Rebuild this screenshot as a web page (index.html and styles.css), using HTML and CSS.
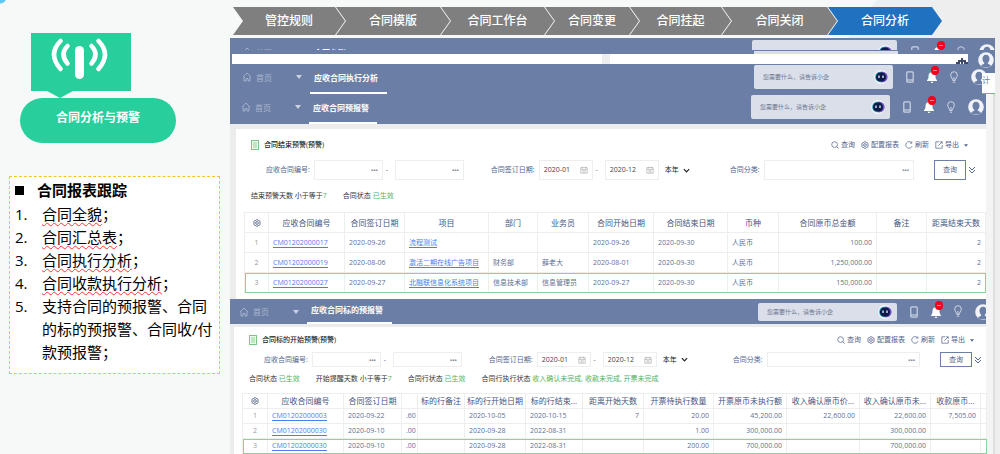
FILE: index.html
```html
<!DOCTYPE html>
<html lang="zh-CN">
<head>
  <meta charset="UTF-8">
  <meta name="viewport" content="width=device-width, initial-scale=1.0">
  <title>合同分析与预警</title>
  <link rel="stylesheet" href="styles.css">
</head>
<body>
  <svg class="sprite" aria-hidden="true">
    <symbol id="i-home" viewBox="0 0 10 10"><path d="M1 5 5 1l4 4M2 4.500V9h2V6.500h2V9h2V4.500" fill="none" stroke="currentColor" stroke-width=".9"/></symbol>
    <symbol id="i-phone" viewBox="0 0 8 12"><rect x=".8" y=".8" width="6.400" height="10.400" rx="1" fill="none" stroke="currentColor" stroke-width="1.200"/><path d="M1 9h6" stroke="currentColor" stroke-width="1.200"/></symbol>
    <symbol id="i-bell" viewBox="0 0 10 12"><path d="M5 0c.8 0 1 .6 1 1.200C8 1.800 8.500 3.500 8.500 5.500c0 2 .5 2.800 1.500 3.700V10H0v-.8c1-.9 1.500-1.700 1.500-3.700C1.500 3.500 2 1.800 4 1.200 4 .6 4.200 0 5 0zM3.700 10.700h2.600C6.200 11.500 5.700 12 5 12s-1.200-.5-1.300-1.300z" fill="#fff"/></symbol>
    <symbol id="i-bulb" viewBox="0 0 8 13"><path d="M2.800 9.500C2.800 7.500 .7 6.500 .7 4a3.300 3.300 0 0 1 6.600 0c0 2.500-2.100 3.500-2.100 5.500zM2.800 11.200h2.400M4 9V6" fill="none" stroke="currentColor" stroke-width="1"/></symbol>
    <symbol id="i-avatar" viewBox="0 0 16 16"><circle cx="8" cy="8" r="7.800" fill="#f1f3f8"/><path d="M8 2.800c2.300 0 3.500 1.700 3.500 4 0 1.600-.6 3-1.700 3.900v1.100L13 13.300 11 15.200H5L3 13.300l3.200-1.500v-1.100C5.100 9.800 4.500 8.400 4.500 6.800c0-2.300 1.200-4 3.500-4z" fill="#6b7fa6"/></symbol>
    <symbol id="i-robot" viewBox="0 0 14 14"><circle cx="7" cy="7" r="7" fill="#f3f4fa"/><rect x="1.200" y="1.800" width="11.600" height="10.400" rx="5" fill="#2aa8b8"/><path d="M7 1.800h1.500a4.600 4.600 0 0 1 0 10.400H7z" fill="#7257c9"/><rect x="2" y="2.400" width="10" height="9.200" rx="4.400" fill="#10194a"/><path d="M5 5.500v2.600M9 5.500v2.600" stroke="#dff" stroke-width="1.300"/></symbol>
    <symbol id="i-sheet" viewBox="0 0 8 10"><rect x=".5" y=".5" width="7" height="9" fill="#eef9ef" stroke="#7cc587"/><path d="M2 3h4M2 5h4M2 7h4" stroke="#7cc587" stroke-width=".8"/></symbol>
    <symbol id="i-search" viewBox="0 0 10 10"><circle cx="4.500" cy="4.500" r="3.600" fill="none" stroke="currentColor" stroke-width=".9"/><path d="m7 7 2.500 2.500" stroke="currentColor"/></symbol>
    <symbol id="i-gear" viewBox="0 0 10 10"><path d="m5 .7 3.800 2.200v4.200L5 9.300 1.200 7.100V2.900z" fill="none" stroke="currentColor"/><circle cx="5" cy="5" r="1.700" fill="none" stroke="currentColor"/></symbol>
    <symbol id="i-refresh" viewBox="0 0 10 10"><path d="M8.800 6.500A4.100 4.100 0 1 1 8 2.100M8.500.5v2.200H6.300" fill="none" stroke="currentColor" stroke-width=".9"/></symbol>
    <symbol id="i-export" viewBox="0 0 10 10"><path d="M5.500 1H1v8h8V5M4 6l5-5M6.500 1H9v2.500" fill="none" stroke="currentColor" stroke-width=".9"/></symbol>
    <symbol id="i-date" viewBox="0 0 10 10"><path d="M1 2h8v7H1zM1 4.300h8M3 .7V3M7 .7V3M3 6h4M3 7.500h4" fill="none" stroke="currentColor" stroke-width=".8"/></symbol>
    <symbol id="i-down" viewBox="0 0 8 8"><path d="m1 2.500 3 3 3-3" fill="none" stroke="currentColor" stroke-width="1.400"/></symbol>
    <symbol id="i-more" viewBox="0 0 8 8"><path d="m1 1 3 3 3-3M1 4l3 3 3-3" fill="none" stroke="currentColor"/></symbol>
    <symbol id="i-caret" viewBox="0 0 6 4"><path d="M0 0h6L3 4z" fill="currentColor"/></symbol>
  </svg>

  <div class="page">
    <aside class="sidebar">
      <div class="badge">
        <svg viewBox="0 0 60 44" fill="none" stroke="#fff" stroke-linecap="round">
          <path d="M29.500 13.500v24" stroke-width="9"/>
          <path d="M17.500 9q-8 8 0 17.500M41.500 9q8 8 0 17.500" stroke-width="4.500"/>
          <path d="M10.500 4q-13 13 0 28M48.500 4q13 13 0 28" stroke-width="4.500"/>
        </svg>
      </div>
      <h1 class="pill">合同分析与预警</h1>
      <section class="notes">
        <h2>合同报表跟踪</h2>
        <ol>
          <li><span class="typo">合同全貌</span>；</li>
          <li><span class="typo">合同汇总表</span>；</li>
          <li><span class="typo">合同执行分析</span>；</li>
          <li><span class="typo">合同收款执行分析</span>；</li>
          <li>支持合同的预报警、合同的标的预报警、合同收/付款预报警；</li>
        </ol>
      </section>
    </aside>

    <main class="main">
      <ol class="steps">
        <li>管控规则</li>
        <li>合同模版</li>
        <li>合同工作台</li>
        <li>合同变更</li>
        <li>合同挂起</li>
        <li>合同关闭</li>
        <li class="active">合同分析</li>
      </ol>

      <div class="reports">
        <div class="clipped">
          <header class="bar bar-back">
            <a class="home" href="#"><svg><use href="#i-home"/></svg>首页</a>
            <span class="tab">合同台账</span>
            <div class="bar-tools">
              <span class="ask"><svg><use href="#i-robot"/></svg></span>
              <svg class="phone"><use href="#i-phone"/></svg>
              <span class="bell"><svg><use href="#i-bell"/></svg><i></i></span>
              <svg class="bulb"><use href="#i-bulb"/></svg>
              <svg class="avatar"><use href="#i-avatar"/></svg>
            </div>
          </header>
        </div>
        <div class="edge"><span></span></div>
        <div class="strip">
          <span class="strip-page"></span>
          <span class="strip-page wide"><svg viewBox="0 0 12 6"><path d="M0 6V4h2V2h3V0h2v2h3v2h2v2H8V4H7v2H5V4H4v2z" fill="#3d4867"/></svg></span>
          <svg class="avatar"><use href="#i-avatar"/></svg>
        </div>

        <header class="bar">
          <a class="home" href="#"><svg><use href="#i-home"/></svg>首页</a>
          <svg class="caret"><use href="#i-caret"/></svg>
          <span class="tab tab-wide">应收合同执行分析</span>
          <div class="bar-tools">
            <label class="ask"><input type="text" placeholder="您需要什么，请告诉小企" aria-label="搜索"><svg><use href="#i-robot"/></svg></label>
            <svg class="phone"><use href="#i-phone"/></svg>
            <span class="bell"><svg><use href="#i-bell"/></svg><i></i></span>
            <svg class="bulb"><use href="#i-bulb"/></svg>
            <svg class="avatar"><use href="#i-avatar"/></svg>
          </div>
          <span class="peek">计</span>
        </header>

        <header class="bar bar-inset">
          <a class="home" href="#"><svg><use href="#i-home"/></svg>首页</a>
          <svg class="caret"><use href="#i-caret"/></svg>
          <span class="tab">应收合同预报警</span>
          <div class="bar-tools">
            <label class="ask"><input type="text" placeholder="您需要什么，请告诉小企" aria-label="搜索"><svg><use href="#i-robot"/></svg></label>
            <svg class="phone"><use href="#i-phone"/></svg>
            <span class="bell"><svg><use href="#i-bell"/></svg><i></i></span>
            <svg class="bulb"><use href="#i-bulb"/></svg>
            <svg class="avatar"><use href="#i-avatar"/></svg>
          </div>
        </header>

        <section class="panel">
          <div class="panel-head">
            <svg class="sheet"><use href="#i-sheet"/></svg>
            <h3>合同结束预警(预警)</h3>
            <div class="actions">
              <button><svg><use href="#i-search"/></svg>查询</button>
              <button><svg><use href="#i-gear"/></svg>配置报表</button>
              <button><svg><use href="#i-refresh"/></svg>刷新</button>
              <button><svg><use href="#i-export"/></svg>导出<svg class="mini"><use href="#i-caret"/></svg></button>
            </div>
          </div>
          <form class="filters">
            <label for="no-a">应收合同编号:</label>
            <span class="box"><input id="no-a" type="text"><b>•••</b></span>
            <i>-</i>
            <span class="box"><input type="text" aria-label="应收合同编号至"><b>•••</b></span>
            <label for="date-a" class="l-date">合同签订日期:</label>
            <span class="box date"><input id="date-a" type="text" value="2020-01"><svg><use href="#i-date"/></svg></span>
            <i>-</i>
            <span class="box date"><input type="text" value="2020-12" aria-label="合同签订日期至"><svg><use href="#i-date"/></svg></span>
            <span class="period"><select aria-label="期间"><option>本年</option></select><svg><use href="#i-down"/></svg></span>
            <label for="type-a" class="l-type">合同分类:</label>
            <span class="box grow"><input id="type-a" type="text"><b>•••</b></span>
            <button type="button" class="query">查询</button>
            <svg class="more"><use href="#i-more"/></svg>
          </form>
          <p class="summary"><span>结束预警天数 小于等于<em>7</em></span><span>合同状态 <em>已生效</em></span></p>
          <table class="grid grid-end">
            <colgroup><col><col><col><col><col><col><col><col><col><col><col><col></colgroup>
            <thead>
              <tr><th><svg><use href="#i-gear"/></svg></th><th>应收合同编号</th><th>合同签订日期</th><th>项目</th><th>部门</th><th>业务员</th><th>合同开始日期</th><th>合同结束日期</th><th>币种</th><th>合同原币总金额</th><th>备注</th><th>距离结束天数</th></tr>
            </thead>
            <tbody>
              <tr><td>1</td><td><a href="#">CM01202000017</a></td><td>2020-09-26</td><td><a href="#">流程测试</a></td><td></td><td></td><td>2020-09-26</td><td>2020-09-30</td><td>人民币</td><td class="num">100.00</td><td></td><td class="num">2</td></tr>
              <tr><td>2</td><td><a href="#">CM01202000019</a></td><td>2020-08-06</td><td><a href="#">激活二期在线广告项目</a></td><td>财务部</td><td>薛老大</td><td>2020-08-01</td><td>2020-09-30</td><td>人民币</td><td class="num">1,250,000.00</td><td></td><td class="num">2</td></tr>
              <tr class="selected"><td>3</td><td><a href="#">CM01202000027</a></td><td>2020-09-27</td><td><a href="#">北融联信息化系统项目</a></td><td>信息技术部</td><td>信息管理员</td><td>2020-09-27</td><td>2020-09-30</td><td>人民币</td><td class="num">150,000.00</td><td></td><td class="num">2</td></tr>
            </tbody>
          </table>
        </section>

        <header class="bar bar-inset bar-low">
          <a class="home" href="#"><svg><use href="#i-home"/></svg>首页</a>
          <svg class="caret"><use href="#i-caret"/></svg>
          <span class="tab tab-wide">应收合同标的预报警</span>
          <div class="bar-tools">
            <label class="ask"><input type="text" placeholder="您需要什么，请告诉小企" aria-label="搜索"><svg><use href="#i-robot"/></svg></label>
            <svg class="phone"><use href="#i-phone"/></svg>
            <span class="bell"><svg><use href="#i-bell"/></svg><i></i></span>
            <svg class="bulb"><use href="#i-bulb"/></svg>
            <svg class="avatar"><use href="#i-avatar"/></svg>
          </div>
        </header>

        <section class="panel panel-low">
          <div class="panel-head">
            <svg class="sheet"><use href="#i-sheet"/></svg>
            <h3>合同标的开始预警(预警)</h3>
            <div class="actions">
              <button><svg><use href="#i-search"/></svg>查询</button>
              <button><svg><use href="#i-gear"/></svg>配置报表</button>
              <button><svg><use href="#i-refresh"/></svg>刷新</button>
              <button><svg><use href="#i-export"/></svg>导出<svg class="mini"><use href="#i-caret"/></svg></button>
            </div>
          </div>
          <form class="filters">
            <label for="no-b">应收合同编号:</label>
            <span class="box"><input id="no-b" type="text"><b>•••</b></span>
            <i>-</i>
            <span class="box"><input type="text" aria-label="应收合同编号至"><b>•••</b></span>
            <label for="date-b" class="l-date">合同签订日期:</label>
            <span class="box date"><input id="date-b" type="text" value="2020-01"><svg><use href="#i-date"/></svg></span>
            <i>-</i>
            <span class="box date"><input type="text" value="2020-12" aria-label="合同签订日期至"><svg><use href="#i-date"/></svg></span>
            <span class="period"><select aria-label="期间"><option>本年</option></select><svg><use href="#i-down"/></svg></span>
            <label for="type-b" class="l-type">合同分类:</label>
            <span class="box grow"><input id="type-b" type="text"><b>•••</b></span>
            <button type="button" class="query">查询</button>
            <svg class="more"><use href="#i-more"/></svg>
          </form>
          <p class="summary"><span>合同状态 <em>已生效</em></span><span>开始提醒天数 小于等于<em>7</em></span><span>合同行状态 <em>已生效</em></span><span>合同行执行状态 <em>收入确认未完成, 收款未完成, 开票未完成</em></span></p>
          <table class="grid grid-start">
            <colgroup><col><col><col><col><col><col><col><col><col><col><col><col><col><col></colgroup>
            <thead>
              <tr><th><svg><use href="#i-gear"/></svg></th><th>应收合同编号</th><th>合同签订日期</th><th></th><th>标的行备注</th><th>标的行开始日期</th><th>标的行结束...</th><th>距离开始天数</th><th>开票待执行数量</th><th>开票原币未执行额</th><th>收入确认原币价...</th><th>收入确认原币未...</th><th>收款原币...</th><th></th></tr>
            </thead>
            <tbody>
              <tr><td>1</td><td><a href="#">CM01202000003</a></td><td>2020-09-22</td><td class="num">.60</td><td></td><td>2020-10-05</td><td>2020-10-15</td><td class="num">7</td><td class="num">20.00</td><td class="num">45,200.00</td><td class="num">22,600.00</td><td class="num">22,600.00</td><td class="num">7,505.00</td><td></td></tr>
              <tr><td>2</td><td><a href="#">CM01202000030</a></td><td>2020-09-10</td><td class="num">.00</td><td></td><td>2020-09-28</td><td>2022-08-31</td><td></td><td class="num">1.00</td><td class="num">300,000.00</td><td></td><td class="num">300,000.00</td><td></td><td></td></tr>
              <tr class="selected"><td>3</td><td><a href="#">CM01202000030</a></td><td>2020-09-10</td><td class="num">.00</td><td></td><td>2020-09-28</td><td>2022-08-31</td><td></td><td class="num">200.00</td><td class="num">700,000.00</td><td></td><td class="num">700,000.00</td><td></td><td></td></tr>
            </tbody>
          </table>
        </section>
      </div>
    </main>
  </div>
</body>
</html>
```

FILE: styles.css
```css
* {
  box-sizing: border-box;
}
body {
  margin: 0;
  height: 100vh;
  overflow: hidden;
  background: radial-gradient(circle at 0 -3px, #5cc8f0 6px, transparent 7px), #f7f9f9;
  font-family: "Open Sans", "Noto Sans CJK SC", sans-serif;
  color: #000;
}
.sprite {
  display: none;
}
svg {
  display: block;
  flex: none;
}
h1, h2, h3, p, ol {
  margin: 0;
  padding: 0;
}
button, input, select {
  font: inherit;
  color: inherit;
  margin: 0;
  padding: 0;
  border: 0;
  background: none;
}
.page {
  display: grid;
  grid-template-columns: 230px minmax(0, 1fr);
}

/* left column */
.sidebar {
  padding: 33px 10px 0 9px;
}
.badge {
  width: 100px;
  height: 65px;
  margin-left: 22px;
  padding-top: 4px;
  background: #28cf9c;
  clip-path: polygon(0 0, 100% 0, 100% 58px, 42px 58px, 29px 65px, 16px 58px, 0 58px);
}
.badge svg {
  width: 60px;
  height: 44px;
  margin-left: 19px;
}
.pill {
  width: 156px;
  height: 45px;
  margin-left: 11px;
  padding-bottom: 6px;
  border-radius: 23px;
  background: #28cf9c;
  color: #fff;
  font-size: 12px;
  line-height: 39px;
  text-align: center;
}
.notes {
  margin-top: 33px;
  padding: 2px 4px 9px 5px;
  border: 1px dashed #fbc02d;
  background: #fff;
  font-size: 15px;
  line-height: 23px;
}
.notes h2 {
  display: flex;
  align-items: center;
  gap: 13px;
  margin-bottom: 1px;
  font-size: 15px;
}
.notes h2::before {
  content: "";
  width: 9px;
  height: 9px;
  background: #000;
}
.notes ol {
  list-style: none;
  counter-reset: note;
}
.notes li {
  display: grid;
  grid-template-columns: 27px auto 1fr;
  counter-increment: note;
}
.notes li::before {
  content: counter(note) ".";
}
.notes li:last-child {
  grid-template-columns: 27px 1fr;
}
.typo {
  text-decoration: underline wavy #f33 1px;
  text-underline-offset: 2px;
}

/* step arrows */
.main {
  position: relative;
  padding: 7px 5px 0 0;
}
.main::before {
  content: "";
  position: absolute;
  inset: 0;
  z-index: -1;
  background: #eee;
  clip-path: polygon(647px 0, 100% 0, 100% 100%, 600px 100%, 600px 60px);
}
.steps {
  display: grid;
  grid-template-columns: 103fr 105fr 104fr 85fr 92fr 106fr 105fr;
  margin: 0 62px 3px 3px;
  list-style: none;
  color: #fff;
  font-size: 12px;
  font-weight: 500;
  line-height: 28px;
  text-align: center;
}
.steps li {
  margin-right: -9px;
  background: #7f7f7f;
  clip-path: polygon(0 0, calc(100% - 10px) 0, 100% 50%, calc(100% - 10px) 100%, 0 100%, 10px 50%);
}
.steps .active {
  background: #2072c0;
}

/* stacked report windows */
.reports {
  border-right: 2px solid #ddd;
  background: #f4f4f4;
}
.clipped {
  height: 12px;
  margin-right: -2px;
  overflow: hidden;
}
.edge, .strip {
  display: flex;
  margin-right: -2px;
  background: #6b7fa6;
}
.edge {
  height: 4px;
  justify-content: flex-end;
  padding: 1px 97px 0 0;
}
.edge span {
  width: 144px;
  background: #d9deea;
}
.strip {
  height: 10px;
  padding-left: 2px;
}
.strip-page {
  flex: 370;
  background: #fff;
}
.strip-page.wide {
  flex: 358;
  border-left: 8px solid #eee;
}
.strip-page svg {
  width: 12px;
  height: 6px;
  margin: 4px 0 0 auto;
}
.strip .avatar {
  position: relative;
  z-index: 1;
  margin: -2px 1px 0 10px;
}
.bar {
  position: relative;
  display: flex;
  align-items: center;
  height: 30px;
  margin-right: -2px;
  padding: 0 8px 4px 12px;
  background: #6b7fa6;
  color: #fff;
  font-size: 8px;
}
.bar-back {
  height: 28px;
  padding: 0 2px 0 12px;
}
.bar-back .tab {
  margin-left: 38px;
}
.bar-inset {
  margin-right: 7px;
  padding-right: 2px;
  padding-left: 11px;
}
.bar-low {
  height: 25px;
  padding: 0 0 0 9px;
  overflow: hidden;
}
.home {
  display: flex;
  align-items: center;
  gap: 4px;
  color: #a9b5ce;
  text-decoration: none;
}
.home svg {
  width: 10px;
  height: 10px;
}
.caret {
  width: 6px;
  height: 4px;
  margin-left: 24px;
  color: #ccd3e2;
}
.tab {
  align-self: stretch;
  display: flex;
  align-items: center;
  margin: 0 0 -4px 8px;
  padding: 0 8px 2px 4px;
  border-bottom: 2px solid #fff;
  font-weight: bold;
}
.tab-wide {
  padding-right: 9px;
}
.bar-low .tab {
  margin-bottom: 0;
}
.bar-tools {
  display: flex;
  align-items: center;
  gap: 13px;
  margin-left: auto;
  color: #ccd3e2;
}
.bar-low .bar-tools {
  margin-right: -5px;
}
.bar-back .bar-tools {
  gap: 14px;
}
.ask {
  display: flex;
  align-items: center;
  width: 139px;
  height: 24px;
  padding: 0 5px 0 9px;
  border-radius: 2px;
  background: #dadfea;
  color: #6c7590;
  font-size: 6px;
}
.bar-low .ask {
  height: 18px;
}
.bar-back .ask {
  width: 145px;
}
.ask input {
  flex: 1;
  min-width: 0;
}
.ask input::placeholder {
  color: #6c7590;
  opacity: 1;
}
.ask svg {
  width: 14px;
  height: 14px;
  margin-left: auto;
}
.phone {
  width: 8px;
  height: 12px;
}
.bell {
  position: relative;
}
.bell svg {
  width: 10px;
  height: 12px;
}
.bell i {
  position: absolute;
  top: -5px;
  left: 4px;
  width: 8px;
  height: 9px;
  border: solid #f5001d;
  border-width: 4px 2px;
  border-radius: 4px;
  background: #ff8090;
}
.bulb {
  width: 8px;
  height: 13px;
}
.avatar {
  width: 16px;
  height: 16px;
}
.peek {
  position: absolute;
  top: 9px;
  right: 0;
  width: 13px;
  height: 21px;
  border-bottom: 1px solid #6cc070;
  background: #fff;
  color: #6b7fa6;
  line-height: 14px;
}

/* report content */
.panel {
  margin: 0 7px 0 0;
  padding: 6px 1px 6px 8px;
  border: solid #ececec;
  border-width: 5px 0 0 6px;
  background: #fff;
  font-size: 7px;
  line-height: 10px;
}
.panel-low {
  padding: 5px 0 0 8px;
  border-width: 3px 0 0 4px;
}
.panel-head {
  display: flex;
  align-items: center;
  height: 20px;
  padding: 0 17px 0 7px;
}
.panel-low .panel-head {
  height: 16px;
  padding-right: 12px;
}
.sheet {
  width: 8px;
  height: 10px;
}
.panel h3 {
  margin-left: 5px;
  font-size: 7px;
  font-weight: 500;
  color: #222;
}
.actions {
  display: flex;
  gap: 6px;
  margin-left: auto;
  color: #52638e;
}
.actions button {
  display: flex;
  align-items: center;
  gap: 2px;
}
.actions svg {
  width: 8px;
  height: 8px;
}
.actions .mini {
  width: 4px;
  height: 3px;
  margin-left: 3px;
}
.filters {
  display: flex;
  align-items: center;
  height: 20px;
  margin-top: 5px;
  padding: 0 9px 0 22px;
  color: #52638e;
}
.panel-low .filters {
  height: 15px;
  margin-top: 4px;
  padding-right: 4px;
}
.box {
  display: flex;
  align-items: center;
  align-self: stretch;
  width: 69px;
  margin-left: 4px;
  padding: 0 4px;
  border: 1px solid #eee;
}
.box input {
  flex: 1;
  width: 0;
  min-width: 0;
  color: #444;
}
.box b {
  color: #8a8f9c;
  font-size: 6px;
}
.box svg {
  width: 8px;
  height: 8px;
  color: #aaa;
}
.filters i {
  width: 8px;
  text-align: center;
  font-style: normal;
}
.date {
  width: 54px;
}
.filters .l-date {
  margin-left: 27px;
}
.period {
  display: flex;
  align-items: center;
  gap: 3px;
  margin-left: 6px;
  color: #222;
}
.period select {
  appearance: none;
  width: 15px;
}
.period svg {
  width: 7px;
  height: 7px;
}
.filters .l-type {
  margin-left: 40px;
}
.panel-low .l-type {
  margin-left: 45px;
}
.filters .grow {
  flex: 1;
}
.query {
  align-self: stretch;
  width: 32px;
  margin: 0 2px 0 20px;
  border: 1px solid #6b7fa6;
}
.more {
  width: 8px;
  height: 8px;
}
.summary {
  display: flex;
  gap: 16px;
  padding: 11px 7px;
  color: #333;
}
.panel-low .summary {
  padding: 7px 7px 9px;
}
.summary em {
  color: #55b160;
  font-style: normal;
}
.grid {
  width: 100%;
  table-layout: fixed;
  border-collapse: collapse;
  color: #5f6f96;
}
.grid th, .grid td {
  height: 20px;
  padding: 0 4px;
  border: 1px solid #eee;
  overflow: hidden;
  white-space: nowrap;
  text-align: left;
}
.grid th {
  padding: 0;
  color: #46557e;
  font-size: 8px;
  font-weight: normal;
  text-align: center;
}
.grid-start th, .grid-start td {
  height: 15px;
}
.grid th svg {
  width: 8px;
  height: 8px;
  margin: auto;
}
.grid td:first-child {
  color: #999;
  text-align: center;
}
.grid .num {
  text-align: right;
}
.grid a {
  border-bottom: 1px solid #4a7df0;
  color: #4a7df0;
  text-decoration: none;
}
.grid .selected {
  outline: 1px solid #92cf9a;
  outline-offset: -1px;
}
.grid-end col:nth-child(1) { width: 24px; }
.grid-end col:nth-child(2) { width: 76px; }
.grid-end col:nth-child(3) { width: 60px; }
.grid-end col:nth-child(4) { width: 84px; }
.grid-end col:nth-child(5) { width: 49px; }
.grid-end col:nth-child(6) { width: 51px; }
.grid-end col:nth-child(7) { width: 65px; }
.grid-end col:nth-child(8) { width: 74px; }
.grid-end col:nth-child(9) { width: 51px; }
.grid-end col:nth-child(10) { width: 98px; }
.grid-end col:nth-child(11) { width: 50px; }
.grid-end col:nth-child(12) { width: 59px; }
.grid-start col:nth-child(1) { width: 25px; }
.grid-start col:nth-child(2) { width: 76px; }
.grid-start col:nth-child(3) { width: 58px; }
.grid-start col:nth-child(4) { width: 16px; }
.grid-start col:nth-child(5) { width: 47px; }
.grid-start col:nth-child(6) { width: 61px; }
.grid-start col:nth-child(7) { width: 57px; }
.grid-start col:nth-child(8) { width: 61px; }
.grid-start col:nth-child(9) { width: 70px; }
.grid-start col:nth-child(10) { width: 73px; }
.grid-start col:nth-child(11) { width: 73px; }
.grid-start col:nth-child(12) { width: 71px; }
.grid-start col:nth-child(13) { width: 50px; }
.grid-start col:nth-child(14) { width: 6px; }
```
